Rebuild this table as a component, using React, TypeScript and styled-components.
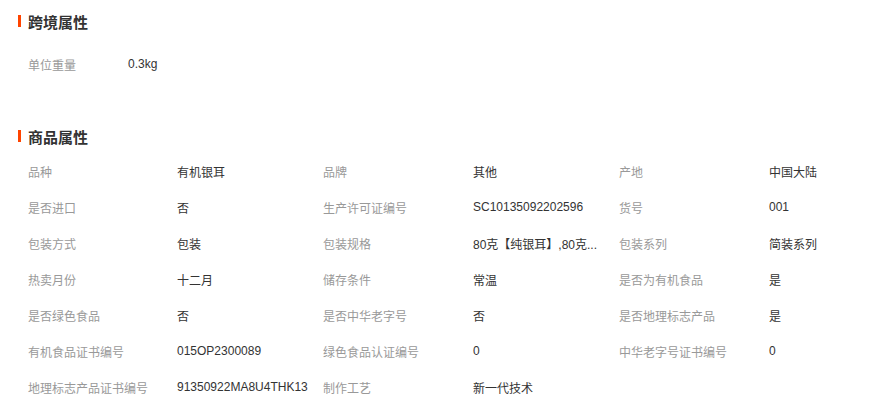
import styled, { createGlobalStyle } from "styled-components";

const GlobalStyle = createGlobalStyle`
  body {
    margin: 0;
    background: #fff;
    font-family: "Liberation Sans", "Noto Sans CJK SC", sans-serif;
    font-size: 12px;
    color: #333;
  }
`;

const Page = styled.div`
  width: 874px;
  padding-top: 9px;
`;

const Section = styled.section<{ $gap?: number }>`
  margin-bottom: ${(p) => p.$gap ?? 0}px;
`;

const Title = styled.h3`
  margin: 0 0 0 18px;
  height: 24px;
  display: flex;
  align-items: center;
  gap: 7px;
  font-size: 15px;
  font-weight: bold;
  color: #333;
  &::before {
    content: "";
    width: 3px;
    height: 12px;
    background: #ff4400;
  }
`;

const Grid = styled.div<{ $cols: string; $top: number }>`
  display: grid;
  grid-template-columns: ${(p) => p.$cols};
  grid-auto-rows: 36px;
  align-items: center;
  padding-left: 28px;
  margin-top: ${(p) => p.$top}px;
`;

const Label = styled.div`
  color: #999;
  white-space: nowrap;
`;

const Value = styled.div`
  color: #333;
  white-space: nowrap;
`;

const crossBorder: [string, string][] = [["单位重量", "0.3kg"]];

const attrs: [string, string][] = [
  ["品种", "有机银耳"],
  ["品牌", "其他"],
  ["产地", "中国大陆"],
  ["是否进口", "否"],
  ["生产许可证编号", "SC10135092202596"],
  ["货号", "001"],
  ["包装方式", "包装"],
  ["包装规格", "80克【纯银耳】,80克..."],
  ["包装系列", "简装系列"],
  ["热卖月份", "十二月"],
  ["储存条件", "常温"],
  ["是否为有机食品", "是"],
  ["是否绿色食品", "否"],
  ["是否中华老字号", "否"],
  ["是否地理标志产品", "是"],
  ["有机食品证书编号", "015OP2300089"],
  ["绿色食品认证编号", "0"],
  ["中华老字号证书编号", "0"],
  ["地理标志产品证书编号", "91350922MA8U4THK13"],
  ["制作工艺", "新一代技术"],
];

const Pairs = ({ items }: { items: [string, string][] }) => (
  <>
    {items.map(([k, v]) => [
      <Label key={k}>{k}</Label>,
      <Value key={k + "-v"}>{v}</Value>,
    ])}
  </>
);

const App = () => {
  return (
    <>
      <GlobalStyle />
      <Page>
        <Section $gap={42}>
          <Title>跨境属性</Title>
          <Grid $cols="100px 1fr" $top={13}>
            <Pairs items={crossBorder} />
          </Grid>
        </Section>
        <Section>
          <Title>商品属性</Title>
          <Grid $cols="149px 146px 150px 146px 150px 1fr" $top={5}>
            <Pairs items={attrs} />
          </Grid>
        </Section>
      </Page>
    </>
  );
};

export default App;
